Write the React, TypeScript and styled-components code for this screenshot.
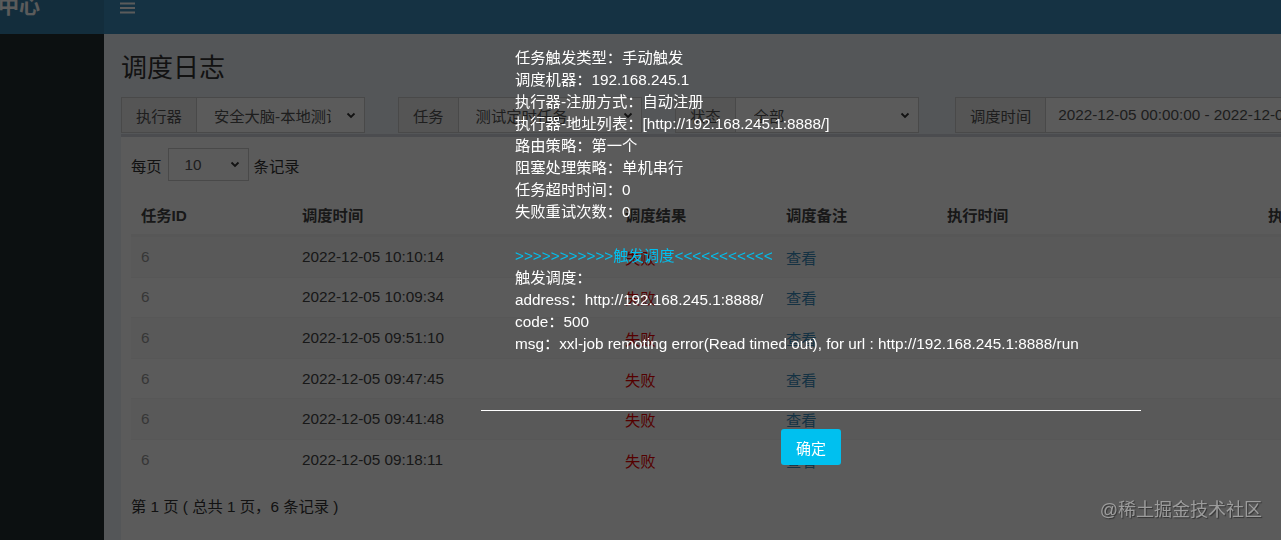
import { FC } from 'react';
import styled, { createGlobalStyle } from 'styled-components';

const GlobalStyle = createGlobalStyle`
  html, body {
    margin: 0;
    padding: 0;
    height: 540px;
    overflow: hidden;
  }
  body {
    background: #ecf0f5;
    font-family: 'Liberation Sans', 'Noto Sans CJK SC', sans-serif;
    font-size: 15.3px;
    color: #333;
  }
  * {
    box-sizing: border-box;
  }
`;

const Page = styled.div`
  display: grid;
  grid-template-columns: 104px 1fr;
  grid-template-rows: 34px 1fr;
  width: 1281px;
  height: 540px;
  overflow: hidden;
`;

const Logo = styled.div`
  background: #367fa9;
  color: #fff;
  font-size: 21px;
  font-weight: bold;
  line-height: 11px;
  white-space: nowrap;
  overflow: hidden;
  text-indent: -2px;
`;

const Navbar = styled.div`
  background: #3c8dbc;
  display: flex;
  align-items: flex-start;
  padding: 1px 0 0 16px;
`;

const Sidebar = styled.aside`
  background: #222d32;
`;

const Content = styled.main`
  padding: 20px 0 0 17px;
  overflow: hidden;
`;

const Title = styled.h1`
  margin: 0;
  font-size: 26px;
  font-weight: normal;
  line-height: 28px;
  color: #333;
`;

const FilterRow = styled.div`
  display: flex;
  gap: 33px;
  margin-top: 15px;
  height: 36px;
`;

const Group = styled.div<{ $w: number; $shift?: number }>`
  display: flex;
  flex: none;
  width: ${(p) => p.$w}px;
  margin-left: ${(p) => p.$shift || 0}px;
  height: 36px;
`;

const Addon = styled.div`
  flex: none;
  display: flex;
  align-items: center;
  padding: 0 14px;
  background: #eee;
  border: 1px solid #ccc;
  color: #555;
`;

const SelectBox = styled.div<{ $pad?: number }>`
  flex: 1;
  min-width: 0;
  display: flex;
  align-items: center;
  padding: 0 8px 0 ${(p) => p.$pad || 17}px;
  background: #fff;
  border: 1px solid #ccc;
  border-left: 0;
  color: #555;
`;

const SelectText = styled.span`
  flex: 1;
  min-width: 0;
  overflow: hidden;
  white-space: nowrap;
`;

const Chevron: FC = () => (
  <svg width='10' height='7' viewBox='0 0 10 7' style={{ flex: 'none', marginLeft: 15 }}>
    <path d='M1.5 1.5 L5 5 L8.5 1.5' fill='none' stroke='#333' strokeWidth='1.8' />
  </svg>
);

const Box = styled.section`
  margin-top: 1px;
  width: 1400px;
  height: 420px;
  background: #fff;
  border-top: 3px solid #d2d6de;
`;

const BoxBody = styled.div`
  padding: 11px 10px 10px;
`;

const LengthRow = styled.div`
  display: flex;
  align-items: center;
  height: 33px;
  color: #333;
`;

const LengthSelect = styled.div`
  display: flex;
  align-items: center;
  width: 81px;
  height: 33px;
  margin: 0 5px 0 6px;
  padding: 0 8px 0 16px;
  border: 1px solid #ccc;
  color: #555;
`;

const Table = styled.div`
  margin-top: 13px;
`;

const cols = '161px 323px 161px 161px 321px 200px';

const HeadRow = styled.div`
  display: grid;
  grid-template-columns: ${cols};
  align-items: center;
  height: 42px;
  border-bottom: 2px solid #f4f4f4;
  font-weight: bold;
  color: #333;
`;

const Row = styled.div<{ $odd?: boolean }>`
  display: grid;
  grid-template-columns: ${cols};
  align-items: center;
  height: 40.6px;
  border-top: 1px solid #f4f4f4;
  background: ${(p) => (p.$odd ? '#f9f9f9' : '#fff')};
`;

const Cell = styled.div<{ $tone?: 'id' | 'fail' | 'link' }>`
  padding-left: 10px;
  white-space: nowrap;
  color: ${(p) =>
    p.$tone === 'id'
      ? '#999'
      : p.$tone === 'fail'
        ? '#e00'
        : p.$tone === 'link'
          ? '#3c8dbc'
          : '#444'};
`;

const Info = styled.div`
  margin-top: 17px;
  line-height: 20px;
  color: #333;
`;

const Backdrop = styled.div`
  position: fixed;
  inset: 0;
  background: rgba(0, 0, 0, 0.645);
  z-index: 1;
`;

const Dialog = styled.div`
  position: fixed;
  left: 481px;
  top: 26px;
  width: 660px;
  z-index: 2;
  color: #fff;
`;

const DialogBody = styled.div`
  height: 384px;
  padding: 21px 34px 0;
  line-height: 22px;
  white-space: nowrap;
`;

const Cyan = styled.span`
  color: #00c0ef;
`;

const DialogFooter = styled.div`
  border-top: 1px solid #fff;
  padding-top: 18px;
  display: flex;
  justify-content: center;
`;

const OkButton = styled.button`
  appearance: none;
  border: none;
  width: 60px;
  height: 36px;
  border-radius: 3px;
  background: #00c0ef;
  color: #fff;
  font-family: inherit;
  font-size: 15px;
  cursor: pointer;
`;

const Watermark = styled.div`
  position: fixed;
  right: 19px;
  bottom: 20px;
  z-index: 3;
  font-size: 18px;
  line-height: 20px;
  color: #9c9c9c;
  text-shadow: 1px 1px 1px rgba(0, 0, 0, 0.45);
`;

const rows = [
  '2022-12-05 10:10:14',
  '2022-12-05 10:09:34',
  '2022-12-05 09:51:10',
  '2022-12-05 09:47:45',
  '2022-12-05 09:41:48',
  '2022-12-05 09:18:11',
];

const App: FC = () => (
  <>
    <GlobalStyle />
    <Page>
      <Logo>中心</Logo>
      <Navbar>
        <svg width='15' height='14' viewBox='0 0 15 14'>
          <rect x='0' y='1.5' width='15' height='2' fill='#fff' />
          <rect x='0' y='6' width='15' height='2' fill='#fff' />
          <rect x='0' y='10.5' width='15' height='2' fill='#fff' />
        </svg>
      </Navbar>
      <Sidebar />
      <Content>
        <Title>调度日志</Title>
        <FilterRow>
          <Group $w={244}>
            <Addon>执行器</Addon>
            <SelectBox>
              <SelectText>安全大脑-本地测试环境</SelectText>
              <Chevron />
            </SelectBox>
          </Group>
          <Group $w={244}>
            <Addon>任务</Addon>
            <SelectBox>
              <SelectText>测试定时任务</SelectText>
              <Chevron />
            </SelectBox>
          </Group>
          <Group $w={244}>
            <Addon>状态</Addon>
            <SelectBox $pad={18}>
              <SelectText>全部</SelectText>
              <Chevron />
            </SelectBox>
          </Group>
          <Group $w={400} $shift={3}>
            <Addon>调度时间</Addon>
            <SelectBox $pad={12}>
              <SelectText>2022-12-05 00:00:00 - 2022-12-05 23:59:59</SelectText>
            </SelectBox>
          </Group>
        </FilterRow>
        <Box>
          <BoxBody>
            <LengthRow>
              每页
              <LengthSelect>
                <SelectText>10</SelectText>
                <Chevron />
              </LengthSelect>
              条记录
            </LengthRow>
            <Table>
              <HeadRow>
                <Cell>任务ID</Cell>
                <Cell>调度时间</Cell>
                <Cell>调度结果</Cell>
                <Cell>调度备注</Cell>
                <Cell>执行时间</Cell>
                <Cell>执行结果</Cell>
              </HeadRow>
              {rows.map((time, i) => (
                <Row key={time} $odd={i % 2 === 0}>
                  <Cell $tone='id'>6</Cell>
                  <Cell>{time}</Cell>
                  <Cell $tone='fail'>失败</Cell>
                  <Cell $tone='link'>查看</Cell>
                  <Cell />
                  <Cell />
                </Row>
              ))}
            </Table>
            <Info>第 1 页 ( 总共 1 页，6 条记录 )</Info>
          </BoxBody>
        </Box>
      </Content>
    </Page>
    <Backdrop />
    <Dialog>
      <DialogBody>
        任务触发类型：手动触发
        <br />
        调度机器：192.168.245.1
        <br />
        执行器-注册方式：自动注册
        <br />
        执行器-地址列表：[http://192.168.245.1:8888/]
        <br />
        路由策略：第一个
        <br />
        阻塞处理策略：单机串行
        <br />
        任务超时时间：0
        <br />
        失败重试次数：0
        <br />
        <br />
        <Cyan>{'>>>>>>>>>>>触发调度<<<<<<<<<<<'}</Cyan>
        <br />
        触发调度：
        <br />
        address：http://192.168.245.1:8888/
        <br />
        code：500
        <br />
        msg：xxl-job remoting error(Read timed out), for url : http://192.168.245.1:8888/run
      </DialogBody>
      <DialogFooter>
        <OkButton>确定</OkButton>
      </DialogFooter>
    </Dialog>
    <Watermark>@稀土掘金技术社区</Watermark>
  </>
);

export default App;
